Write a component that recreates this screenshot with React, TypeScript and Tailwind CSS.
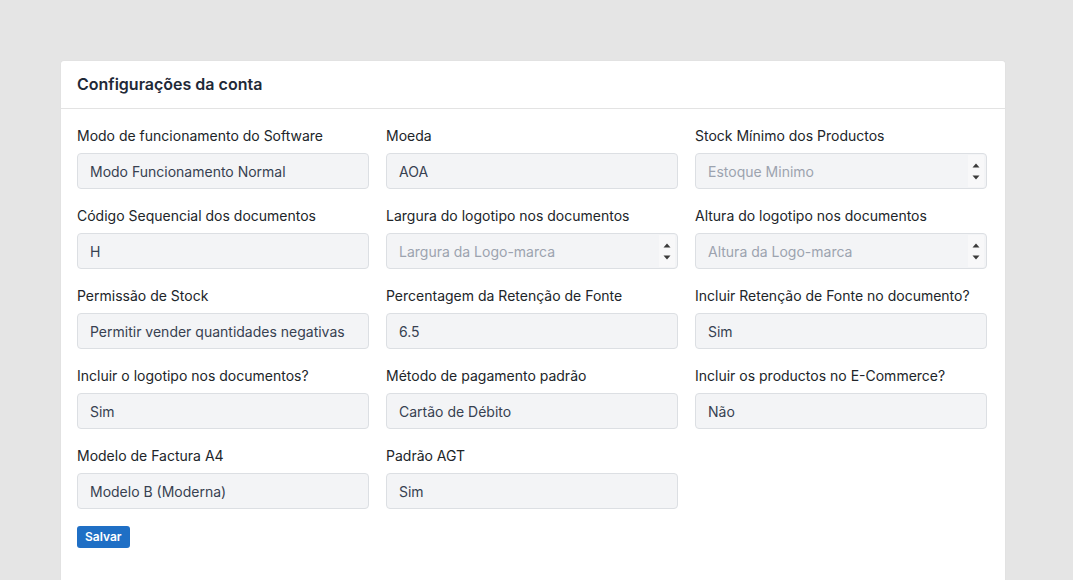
import React from "react";

type Field = { label: string; value: string; placeholder?: boolean; spin?: boolean };

const fields: Field[] = [
  { label: "Modo de funcionamento do Software", value: "Modo Funcionamento Normal" },
  { label: "Moeda", value: "AOA" },
  { label: "Stock Mínimo dos Productos", value: "Estoque Minimo", placeholder: true, spin: true },
  { label: "Código Sequencial dos documentos", value: "H" },
  { label: "Largura do logotipo nos documentos", value: "Largura da Logo-marca", placeholder: true, spin: true },
  { label: "Altura do logotipo nos documentos", value: "Altura da Logo-marca", placeholder: true, spin: true },
  { label: "Permissão de Stock", value: "Permitir vender quantidades negativas" },
  { label: "Percentagem da Retenção de Fonte", value: "6.5" },
  { label: "Incluir Retenção de Fonte no documento?", value: "Sim" },
  { label: "Incluir o logotipo nos documentos?", value: "Sim" },
  { label: "Método de pagamento padrão", value: "Cartão de Débito" },
  { label: "Incluir os productos no E-Commerce?", value: "Não" },
  { label: "Modelo de Factura A4", value: "Modelo B (Moderna)" },
  { label: "Padrão AGT", value: "Sim" },
];

function Spin() {
  return (
    <div className="flex h-full w-[16px] flex-col items-center justify-center gap-[7px] bg-[#f8f8f9]">
      <svg width="8" height="5" viewBox="0 0 8 5"><path d="M4 0.5 L7.5 4.5 L0.5 4.5 Z" fill="#3a3a3a" /></svg>
      <svg width="8" height="5" viewBox="0 0 8 5"><path d="M0.5 0.5 L7.5 0.5 L4 4.5 Z" fill="#3a3a3a" /></svg>
    </div>
  );
}

export default function App() {
  return (
    <div
      className="min-h-[580px] bg-[#e5e5e5] pt-[60px] pl-[60px] pr-[67px]"
      style={{ fontFamily: "Inter, 'Noto Sans', sans-serif" }}
    >
      <div className="h-[520px] overflow-hidden rounded-t-[4px] border border-b-0 border-[#e2e2e2] bg-white">
        <div className="flex h-[48px] items-center border-b border-[#e3e3e3] px-[16px] pb-[1px]">
          <h1 className="text-[16px] font-semibold text-[#1f2937]">Configurações da conta</h1>
        </div>
        <div className="px-[16px] pt-[16px]">
          <div className="grid grid-cols-[292px_292px_292px] gap-x-[17px] gap-y-[16px]">
            {fields.map((f) => (
              <div key={f.label}>
                <div className="mb-[7px] h-[21px] text-[14px] leading-[21px] text-[#212529]">{f.label}</div>
                <div className="flex h-[36px] items-center rounded-[4px] border border-[#dcdfe3] bg-[#f3f4f6] pl-[12px] pr-[1px]">
                  <span
                    className={
                      "flex-1 text-[14px] " + (f.placeholder ? "text-[#9ca3af]" : "text-[#374151]")
                    }
                  >
                    {f.value}
                  </span>
                  {f.spin && (
                    <div className="h-[32px] pr-[1px]">
                      <Spin />
                    </div>
                  )}
                </div>
              </div>
            ))}
          </div>
          <div className="mt-[17px] flex">
            <button className="flex h-[22px] items-center rounded-[3px] bg-[#1f6fc5] px-[8px] text-[12px] font-semibold text-white">
              Salvar
            </button>
          </div>
        </div>
      </div>
    </div>
  );
}
